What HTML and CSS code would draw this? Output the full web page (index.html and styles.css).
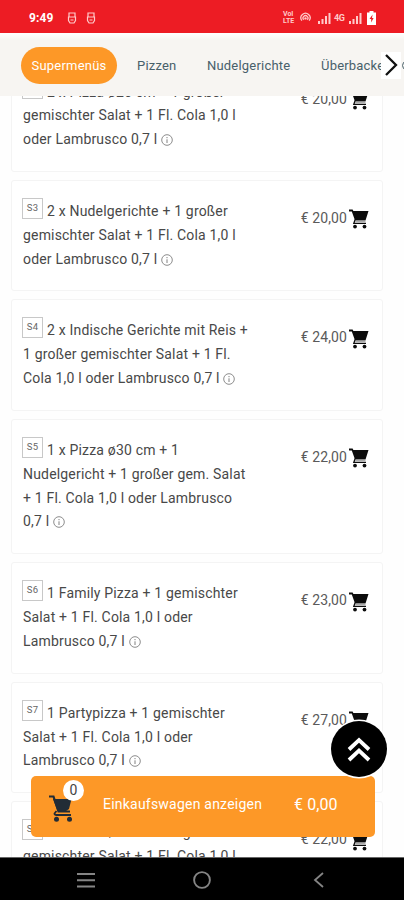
FILE: index.html
```
<!DOCTYPE html>
<html lang="de">
<head>
<meta charset="utf-8">
<meta name="viewport" content="width=device-width">
<title>Speisekarte</title>
<link rel="stylesheet" href="styles.css">
</head>
<body>
<svg width="0" height="0" class="defs">
  <symbol id="cart" viewBox="0 0 20 20"><path d="M0 .5h3.600l.8 1.500H19.500L16.500 11.500H6L2.800 2.500H0z"/><path d="M6.200 10.500 4.800 14.300H17" fill="none" stroke="currentColor" stroke-width="1.300"/><path d="M6 12.600h10.500" stroke="#aaa" stroke-width="1.600"/><circle cx="6" cy="17.600" r="1.900"/><circle cx="15.500" cy="17.600" r="1.900"/></symbol>
  <symbol id="info" viewBox="0 0 12 12"><circle cx="6" cy="6" r="5.300" fill="none" stroke="currentColor" stroke-width=".9"/><path d="M6 5.300V9M6 3v1.200" stroke="currentColor" stroke-width="1"/></symbol>
  <symbol id="signal" viewBox="0 0 13 12"><path d="M0 9h2v3H0zM3.500 7h2v5h-2zM7 4h2v8H7zM10.500 1h2v11h-2z"/></symbol>
  <symbol id="app" viewBox="0 0 10 12"><path d="M2 1h6v4H2zM1.500 5h7v3.500L7 11H3L1.500 8.500zM3.500 8h3" fill="none" stroke="currentColor" stroke-width="1.200"/></symbol>
</svg>
<div class="screen">
  <div class="status">
    <span class="time">9:49</span>
    <svg class="app"><use href="#app"/></svg>
    <svg class="app"><use href="#app"/></svg>
    <span class="volte"><span>VoI</span><span>LTE</span></span>
    <svg class="hotspot" viewBox="0 0 12 12"><path d="M2 9.500a5 5 0 1 1 8 0M4 8.500a2.700 2.700 0 1 1 4 0" fill="none" stroke="currentColor" stroke-width="1.400"/><circle cx="6" cy="7" r="1.300"/></svg>
    <svg class="signal"><use href="#signal"/></svg>
    <span class="net">4G</span>
    <svg class="signal second"><use href="#signal"/></svg>
    <svg class="battery" viewBox="0 0 9 14"><path d="M2.500 0h4v1.500H9V14H0V1.500h2.500z"/><path d="M5.600 3.500 2.500 8h1.700v3.500L6.600 7H5z" fill="#ed1c24"/></svg>
  </div>
  <nav class="tabs">
    <a class="tab active">Supermenüs</a>
    <a class="tab pizzen">Pizzen</a>
    <a class="tab nudel">Nudelgerichte</a>
    <a class="tab ueber">Überbacke</a>
    <span class="next"><svg viewBox="0 0 18 26"><path d="M4 3l10 10L4 23" fill="none" stroke="#111" stroke-width="2.300"/></svg></span>
    <span class="peek"></span>
  </nav>
  <main class="menu">
    <div class="list">
      <article class="card"><p class="name"><span class="no">S2</span>2 x Pizza ø26 cm + 1 großer<br>gemischter Salat + 1 Fl. Cola 1,0 l<br>oder Lambrusco 0,7 l <svg class="info"><use href="#info"/></svg></p><div class="price">€ 20,00<svg class="cart"><use href="#cart"/></svg></div></article>
      <article class="card"><p class="name"><span class="no">S3</span>2 x Nudelgerichte + 1 großer<br>gemischter Salat + 1 Fl. Cola 1,0 l<br>oder Lambrusco 0,7 l <svg class="info"><use href="#info"/></svg></p><div class="price">€ 20,00<svg class="cart"><use href="#cart"/></svg></div></article>
      <article class="card"><p class="name"><span class="no">S4</span>2 x Indische Gerichte mit Reis +<br>1 großer gemischter Salat + 1 Fl.<br>Cola 1,0 l oder Lambrusco 0,7 l <svg class="info"><use href="#info"/></svg></p><div class="price">€ 24,00<svg class="cart"><use href="#cart"/></svg></div></article>
      <article class="card"><p class="name"><span class="no">S5</span>1 x Pizza ø30 cm + 1<br>Nudelgericht + 1 großer gem. Salat<br>+ 1 Fl. Cola 1,0 l oder Lambrusco<br>0,7 l <svg class="info"><use href="#info"/></svg></p><div class="price">€ 22,00<svg class="cart"><use href="#cart"/></svg></div></article>
      <article class="card"><p class="name"><span class="no">S6</span>1 Family Pizza + 1 gemischter<br>Salat + 1 Fl. Cola 1,0 l oder<br>Lambrusco 0,7 l <svg class="info"><use href="#info"/></svg></p><div class="price">€ 23,00<svg class="cart"><use href="#cart"/></svg></div></article>
      <article class="card"><p class="name"><span class="no">S7</span>1 Partypizza + 1 gemischter<br>Salat + 1 Fl. Cola 1,0 l oder<br>Lambrusco 0,7 l <svg class="info"><use href="#info"/></svg></p><div class="price">€ 27,00<svg class="cart"><use href="#cart"/></svg></div></article>
      <article class="card"><p class="name"><span class="no">S8</span>2 x Pizza ø30 cm + 1 großer<br>gemischter Salat + 1 Fl. Cola 1,0 l<br>oder Lambrusco 0,7 l</p><div class="price">€ 22,00<svg class="cart"><use href="#cart"/></svg></div></article>
    </div>
  </main>
  <div class="basket">
    <span class="basket-icon"><svg viewBox="0 0 26 28"><path d="M1 2.500h4.500l5 15H22" fill="none" stroke="#222c36" stroke-width="2.200"/><path d="M5 5h18.500l-2.500 10-3 2H9.500z" fill="#222c36"/><path d="M8.500 17l-2 2.500q0 1.500 2 1.500H23" fill="none" stroke="#222c36" stroke-width="1.800"/><circle cx="8.500" cy="25.200" r="2.500" fill="#222c36"/><circle cx="21.500" cy="25.200" r="2.500" fill="#222c36"/></svg><span class="count">0</span></span>
    <span class="label">Einkaufswagen anzeigen</span>
    <span class="sum">€ 0,00</span>
  </div>
  <div class="totop"><svg viewBox="0 0 24 26"><path d="M2 13.500 12 4l10 9.500M2 24l10-9.500L22 24" fill="none" stroke="#fff" stroke-width="3.800"/></svg></div>
  <div class="sysnav">
    <svg viewBox="0 0 18 16"><path d="M0 2h18M0 8.200h18M0 14.400h18" stroke="#858585" stroke-width="2"/></svg>
    <svg viewBox="0 0 18 18"><circle cx="9" cy="9" r="7.900" fill="none" stroke="#858585" stroke-width="1.900"/></svg>
    <svg class="back" viewBox="0 0 11 16"><path d="M10 1 2 8l8 7" fill="none" stroke="#858585" stroke-width="1.800"/></svg>
  </div>
</div>
</body>
</html>
```
FILE: styles.css
```
* { box-sizing: border-box; }
body { margin: 0; background: #fefefe; font-family: Roboto, "Liberation Sans", sans-serif; color: #484848; }
.defs { position: absolute; }
.screen { position: relative; width: 404px; height: 900px; display: grid; grid-template-rows: 33px 63px 761px 43px; overflow: hidden; }
svg { display: block; fill: currentColor; flex: none; }

.status { background: #ed1c24; color: #ffcaca; display: flex; align-items: center; padding: 2px 0 0 29px; }
.time { width: 38px; font-size: 12px; font-weight: 700; color: #fff; letter-spacing: .1px; }
.app { width: 10px; height: 12px; margin-right: 9px; }
.volte { margin-left: 178px; width: 16px; font-size: 7px; line-height: 7px; font-weight: 700; display: grid; }
.hotspot { width: 11px; height: 11px; margin-left: 1px; }
.signal { width: 13px; height: 12px; margin-left: 7px; }
.net { font-size: 9px; font-weight: 700; margin-left: 3px; width: 12px; letter-spacing: -.4px; }
.signal.second { margin-left: 3px; }
.battery { width: 9px; height: 14px; margin-left: 5px; color: #fff; }

.tabs { background: linear-gradient(#fff, #f7f5f2 7px); display: flex; align-items: center; padding: 1px 0 0 21px; overflow: hidden; position: relative; }
.tab { font-size: 13px; color: #48606a; white-space: nowrap; flex: none; letter-spacing: .2px; }
.tab.active { width: 96px; height: 37px; border-radius: 19px; background: #fd9827; color: #fff; display: flex; align-items: center; justify-content: center; }
.pizzen { margin-left: 20px; width: 70px; }
.nudel { width: 114px; }
.ueber { width: 60px; overflow: hidden; }
.next { width: 20px; height: 27px; background: #fff; flex: none; display: flex; align-items: center; justify-content: center; }
.next svg { width: 18px; height: 26px; }
.peek { width: 9px; height: 9px; margin-left: 1px; border: 1.500px solid #48606a; border-radius: 5px; flex: none; }

.menu { overflow: hidden; }
.list { margin-top: -35.500px; padding: 0 21px 0 11px; display: flex; flex-direction: column; gap: 8px; }
.card { flex: none; border: 1px solid #f4f4f4; border-radius: 3px; background: #fff; padding: 19px 13px 19px 11px; display: flex; justify-content: space-between; align-items: flex-start; }
.name { margin: 0; font-size: 14px; line-height: 23.830px; white-space: nowrap; letter-spacing: .18px; }
.no { display: inline-block; width: 21px; height: 21px; margin: -4px 4px -4px -1px; border: 1px solid #c8c8c8; font-size: 9.500px; line-height: 18px; text-align: center; color: #666; position: relative; top: -4px; vertical-align: middle; }
.info { display: inline-block; width: 12px; height: 12px; margin-left: 0; color: #808080; vertical-align: -2px; }
.price { display: flex; align-items: center; gap: 2px; height: 22px; margin-top: 7px; font-size: 14px; letter-spacing: .1px; color: #5a5a5a; white-space: nowrap; }
.cart { width: 20px; height: 20px; margin-top: 3px; color: #0c0c0c; }

.basket { position: absolute; left: 31px; top: 776px; width: 344px; height: 61px; border-radius: 5px; background: #fd9827; color: #fff; display: flex; align-items: center; padding: 0 0 6px 17px; font-size: 14px; }
.basket-icon { position: relative; width: 55px; height: 28px; margin-top: 8px; }
.basket-icon svg { width: 26px; height: 28px; }
.count { position: absolute; left: 15px; top: -14px; width: 21px; height: 21px; border-radius: 50%; background: #fff; color: #444; text-align: center; line-height: 21px; font-size: 14px; }
.label { width: 191px; white-space: nowrap; letter-spacing: .22px; }
.sum { font-size: 16px; letter-spacing: .1px; padding-top: 2px; }
.totop { position: absolute; left: 331px; top: 721px; width: 56px; height: 56px; border-radius: 50%; background: #000; box-shadow: 0 0 0 1.500px #fff; display: flex; align-items: center; justify-content: center; }
.totop svg { width: 24px; height: 26px; }

.sysnav { background: #000; border-top: 1px solid #666; display: flex; align-items: center; padding: 2px 0 0 77px; z-index: 1; }
.sysnav svg { width: 18px; height: 18px; margin-right: 98px; }
.sysnav .back { width: 11px; height: 16px; margin: 0 0 0 4px; }
```
